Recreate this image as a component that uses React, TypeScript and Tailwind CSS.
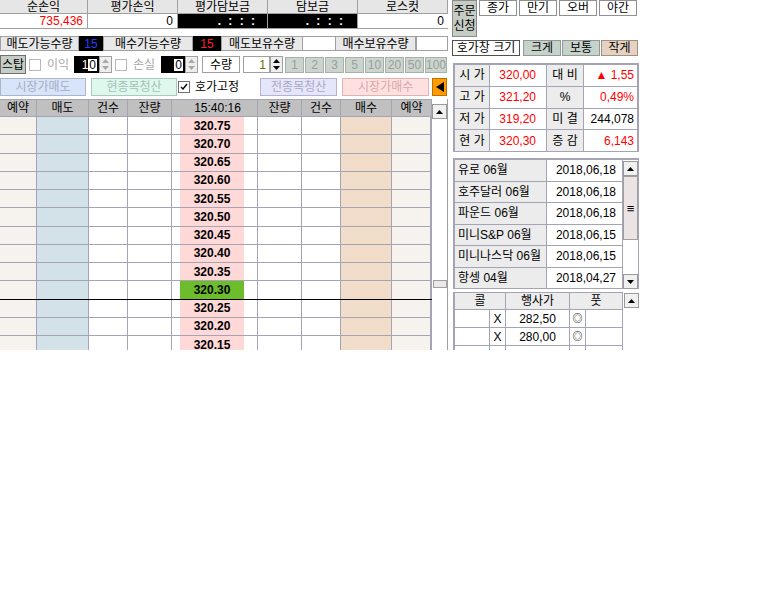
import React from "react";

const LINE = "border-[#a4a4b4]";

function Tri({ up, color = "#000" }: { up: boolean; color?: string }) {
  return (
    <svg width="7" height="4" viewBox="0 0 7 4">
      <polygon points={up ? "0,4 7,4 3.5,0" : "0,0 7,0 3.5,4"} fill={color} />
    </svg>
  );
}

function ScrollBtn({ up }: { up: boolean }) {
  return (
    <div className="w-[15px] h-[15px] border border-[#9a9a9a] bg-[#f0f0f0] flex items-center justify-center shrink-0">
      <Tri up={up} />
    </div>
  );
}

function Check({ checked, disabled }: { checked?: boolean; disabled?: boolean }) {
  return (
    <div
      className={
        "w-[12px] h-[12px] bg-white border flex items-center justify-center shrink-0 " +
        (disabled ? "border-[#b8b8b8]" : "border-[#707070]")
      }
    >
      {checked && (
        <svg width="8" height="8" viewBox="0 0 8 8">
          <polyline points="1,4 3,6 7,1" fill="none" stroke="#000" strokeWidth="1.4" />
        </svg>
      )}
    </div>
  );
}

function TopTable() {
  const heads = ["순손익", "평가손익", "평가담보금", "담보금", "로스컷"];
  const widths = ["w-[88px]", "w-[90px]", "w-[90px]", "w-[90px]", "w-[90px]"];
  return (
    <div className="w-[448px]">
      <div className="flex h-[14px]">
        {heads.map((h, i) => (
          <div
            key={h}
            className={widths[i] + " bg-[#e6e6e6] border-r border-b border-[#a0a0a0] flex items-center justify-center"}
          >
            {h}
          </div>
        ))}
      </div>
      <div className="flex h-[15px] border-b border-[#a0a0a0]">
        <div className="w-[88px] border-r border-[#a0a0a0] flex items-center justify-end pr-[4px] text-[#ff0000]">735,436</div>
        <div className="w-[90px] border-r border-[#a0a0a0] flex items-center justify-end pr-[4px]">0</div>
        <div className="w-[90px] bg-black border-r border-[#a0a0a0] flex items-center justify-end pr-[10px] text-white font-bold whitespace-pre tracking-[2px]">. : : :</div>
        <div className="w-[90px] bg-black border-r border-[#a0a0a0] flex items-center justify-end pr-[12px] text-white font-bold whitespace-pre tracking-[2px]">. : : :</div>
        <div className="w-[90px] flex items-center justify-end pr-[4px]">0</div>
      </div>
    </div>
  );
}

function QtyRow() {
  return (
    <div className="flex h-[15px] mt-[7px] w-[448px]">
      <div className="w-[79px] bg-[#e8e8e8] border border-[#a0a0a0] flex items-center justify-center">매도가능수량</div>
      <div className="w-[24px] bg-black flex items-center justify-center text-[#2040ff]">15</div>
      <div className="w-[90px] bg-[#e8e8e8] border border-[#a0a0a0] flex items-center justify-center">매수가능수량</div>
      <div className="w-[28px] bg-black flex items-center justify-center text-[#ff2020]">15</div>
      <div className="w-[82px] bg-[#e8e8e8] border border-[#a0a0a0] flex items-center justify-center">매도보유수량</div>
      <div className="w-[32px] bg-white border-y border-[#a0a0a0]"></div>
      <div className="w-[81px] bg-[#e8e8e8] border border-[#a0a0a0] flex items-center justify-center">매수보유수량</div>
      <div className="w-[32px] bg-white border border-[#a0a0a0]"></div>
    </div>
  );
}

function Spin({ dark }: { dark?: boolean }) {
  return (
    <div className="w-[13px] h-[17px] bg-[#eeeeee] border border-[#a0a0a0] flex flex-col items-center justify-around shrink-0">
      <Tri up color={dark ? "#000" : "#a8a8a8"} />
      <Tri up={false} color={dark ? "#000" : "#a8a8a8"} />
    </div>
  );
}

function StopRow() {
  const qty = ["1", "2", "3", "5", "10", "20", "50", "100"];
  return (
    <div className="flex items-center h-[19px] mt-[4px] w-[448px]">
      <div className="w-[26px] h-[19px] shrink-0 bg-[#c4cec6] border border-[#707070] flex items-center justify-center">스탑</div>
      <div className="ml-[3px]"><Check disabled /></div>
      <div className="w-[33px] shrink-0 pl-[6px] whitespace-nowrap text-[#a8a8a8]">이익</div>
      <div className="flex items-center shrink-0">
        <div className="w-[25px] h-[17px] bg-black flex items-center justify-end pr-[2px] text-white">
          1<span className="bg-white text-black px-[1px] leading-[12px]">0</span>
        </div>
        <Spin />
      </div>
      <div className="ml-[3px]"><Check disabled /></div>
      <div className="w-[34px] shrink-0 pl-[6px] whitespace-nowrap text-[#a8a8a8]">손실</div>
      <div className="flex items-center shrink-0">
        <div className="w-[24px] h-[17px] bg-black flex items-center justify-end pr-[2px] text-white">
          <span className="bg-white text-black px-[1px] leading-[12px]">0</span>
        </div>
        <Spin />
      </div>
      <div className="ml-[4px] w-[38px] h-[17px] shrink-0 bg-white border border-[#a0a0a0] flex items-center justify-center whitespace-nowrap">수량</div>
      <div className="ml-[3px] w-[27px] h-[17px] shrink-0 bg-white border border-[#a0a0a0] flex items-center justify-end pr-[3px] text-[#6a6a00]">1</div>
      <Spin dark />
      <div className="ml-[2px] flex gap-[1px] shrink-0">
        {qty.map((q) => (
          <div
            key={q}
            className={
              (q === "100" ? "w-[22px]" : "w-[19px]") +
              " h-[16px] bg-[#ccd4ce] border border-[#a8b0aa] flex items-center justify-center text-[#9aa09c]"
            }
          >
            {q}
          </div>
        ))}
      </div>
    </div>
  );
}

function OrderButtons() {
  return (
    <div className="flex items-center h-[18px] mt-[4px] w-[448px]">
      <div className="w-[86px] h-[18px] bg-[#d8e4fa] border border-[#aab6cc] flex items-center justify-center text-[#a4aec4]">시장가매도</div>
      <div className="ml-[5px] w-[86px] h-[18px] bg-[#def8ee] border border-[#aacabb] flex items-center justify-center text-[#a2c2b2]">현종목청산</div>
      <div className="ml-[1px]"><Check checked /></div>
      <div className="ml-[5px] whitespace-nowrap">호가고정</div>
      <div className="ml-[21px] w-[77px] h-[18px] bg-[#e6e6fa] border border-[#b2b2d2] flex items-center justify-center text-[#a8a8c8]">전종목청산</div>
      <div className="ml-[5px] w-[87px] h-[18px] bg-[#ffe0e0] border border-[#e0b2b2] flex items-center justify-center text-[#d8a8a8]">시장가매수</div>
      <div className="ml-[3px] w-[15px] h-[18px] bg-[#ff9c00] border border-[#c07000] flex items-center justify-center">
        <svg width="8" height="10" viewBox="0 0 8 10">
          <polygon points="8,0 8,10 0,5" fill="#000" />
        </svg>
      </div>
    </div>
  );
}

const prices = [
  "320.75", "320.70", "320.65", "320.60", "320.55", "320.50", "320.45",
  "320.40", "320.35", "320.30", "320.25", "320.20", "320.15",
];

function BookRow({ price, current }: { price: string; current: boolean }) {
  const bottom = current ? "border-b-black" : "";
  return (
    <div className={"flex h-[18.25px] border-b " + LINE + " " + bottom}>
      <div className={"w-[37px] bg-[#f6f3ef] border-r " + LINE}></div>
      <div className={"w-[52px] bg-[#d2e2e8] border-r " + LINE}></div>
      <div className={"w-[39px] bg-white border-r " + LINE}></div>
      <div className={"w-[44px] bg-white border-r " + LINE}></div>
      <div className={"w-[86px] bg-white border-r flex " + LINE}>
        <div className="w-[8px]"></div>
        <div
          className={
            "w-[64px] flex items-center justify-center font-bold text-black " +
            (current ? "bg-[#6cbc2c]" : "bg-[#ffd8d8]")
          }
        >
          {price}
        </div>
      </div>
      <div className={"w-[44px] bg-white border-r " + LINE}></div>
      <div className={"w-[39px] bg-white border-r " + LINE}></div>
      <div className={"w-[51px] bg-[#f2dcca] border-r " + LINE}></div>
      <div className={"w-[40px] bg-[#f6f3ef] border-r-2 " + LINE}></div>
    </div>
  );
}

function OrderBook() {
  const heads: [string, string][] = [
    ["예약", "w-[37px]"], ["매도", "w-[52px]"], ["건수", "w-[39px]"], ["잔량", "w-[44px]"],
    ["15:40:16", "w-[86px]"], ["잔량", "w-[44px]"], ["건수", "w-[39px]"], ["매수", "w-[51px]"], ["예약", "w-[40px]"],
  ];
  return (
    <div className="flex mt-[3px] w-[448px] flex-1 overflow-hidden">
      <div className="w-[432px]">
        <div className={"flex h-[18px] bg-[#c0c0c0] border-y " + LINE}>
          {heads.map(([h, w], i) => (
            <div key={i} className={w + " border-r flex items-center justify-center " + LINE + (i === 4 ? " pl-[6px]" : "")}>
              {h}
            </div>
          ))}
        </div>
        {prices.map((p) => (
          <BookRow key={p} price={p} current={p === "320.30"} />
        ))}
      </div>
      <div className="w-[16px] bg-white border-r border-[#a0a0a0] flex flex-col items-center pt-[5px]">
        <ScrollBtn up />
        <div className="mt-[161px] w-[14px] h-[8px] bg-[#ece8e8] border border-[#a0a0a0]"></div>
      </div>
    </div>
  );
}

function RightPanel() {
  const info: [string, string, string, string, string][] = [
    ["시 가", "320,00", "대 비", "▲ 1,55", "text-[#ff0000]"],
    ["고 가", "321,20", "%", "0,49%", "text-[#ff0000]"],
    ["저 가", "319,20", "미 결", "244,078", "text-black"],
    ["현 가", "320,30", "증 감", "6,143", "text-[#ff0000]"],
  ];
  const contracts: [string, string][] = [
    ["유로 06월", "2018,06,18"],
    ["호주달러 06월", "2018,06,18"],
    ["파운드 06월", "2018,06,18"],
    ["미니S&P 06월", "2018,06,15"],
    ["미니나스닥 06월", "2018,06,15"],
    ["항셍 04월", "2018,04,27"],
  ];
  const strikes = ["282,50", "280,00", ""];
  return (
    <div className="w-[192px] pl-[4px] flex flex-col">
      <div className="flex h-[37px]">
        <div className="w-[25px] h-[37px] bg-[#c4ccc4] border border-[#8a8a8a] flex flex-col items-center justify-center leading-[15px]">
          <span>주문</span>
          <span>신청</span>
        </div>
        <div className="ml-[2px] flex gap-[2px] h-[16px]">
          {["종가", "만기", "오버", "야간"].map((t) => (
            <div key={t} className="w-[38px] h-[16px] bg-white border border-[#909090] flex items-center justify-center">
              {t}
            </div>
          ))}
        </div>
      </div>
      <div className="flex h-[16px] mt-[3px] items-center">
        <div className="w-[68px] h-[16px] bg-white border border-[#505050] flex items-center justify-center whitespace-nowrap">호가창 크기</div>
        <div className="ml-[3px] w-[38px] h-[16px] bg-[#c6d2ca] border border-[#909a94] flex items-center justify-center">크게</div>
        <div className="ml-[1px] w-[38px] h-[16px] bg-[#c6d2ca] border border-[#909a94] flex items-center justify-center">보통</div>
        <div className="ml-[1px] w-[37px] h-[16px] bg-[#e6d2c2] border border-[#a09080] flex items-center justify-center">작게</div>
      </div>
      <div className={"ml-[1px] mt-[7px] w-[186px] border-2 border-b-0 " + LINE}>
        {info.map(([a, b, c, d, col]) => (
          <div key={a} className={"flex h-[21.75px] border-b " + LINE}>
            <div className={"w-[35px] bg-[#ececec] border-r flex items-center justify-center whitespace-pre " + LINE}>{a}</div>
            <div className={"w-[57px] bg-white border-r flex items-center justify-end pr-[10px] text-[#ff0000] " + LINE}>{b}</div>
            <div className={"w-[37px] bg-[#ececec] border-r flex items-center justify-center whitespace-pre " + LINE}>{c}</div>
            <div className={"flex-1 bg-white flex items-center justify-end pr-[3px] " + col}>{d}</div>
          </div>
        ))}
      </div>
      <div className="ml-[1px] mt-[6px] flex">
        <div className={"w-[170px] border-2 border-r-0 border-b-0 " + LINE}>
          {contracts.map(([n, d]) => (
            <div key={n} className={"flex h-[21.5px] border-b " + LINE}>
              <div className={"w-[92px] bg-[#ececec] border-r flex items-center pl-[3px] whitespace-nowrap " + LINE}>{n}</div>
              <div className={"flex-1 bg-white border-r flex items-center justify-end pr-[6px] " + LINE}>{d}</div>
            </div>
          ))}
        </div>
        <div className={"w-[16px] border-t-2 border-r flex flex-col items-center pt-[1px] " + LINE}>
          <ScrollBtn up />
          <div className="w-[15px] h-[64px] bg-[#ece4e4] border border-[#a0a0a0] flex items-center justify-center text-[13px] leading-none">≡</div>
          <div className="flex-1"></div>
          <ScrollBtn up={false} />
        </div>
      </div>
      <div className="ml-[1px] mt-[3px] flex">
        <div className={"w-[170px] border-l-2 " + LINE}>
          <div className={"flex h-[18px] bg-[#ececec] border-y " + LINE}>
            <div className={"w-[51px] border-r flex items-center justify-center " + LINE}>콜</div>
            <div className={"w-[64px] border-r flex items-center justify-center " + LINE}>행사가</div>
            <div className={"flex-1 border-r flex items-center justify-center " + LINE}>풋</div>
          </div>
          {strikes.map((s, i) => (
            <div key={i} className={"flex h-[18px] border-b bg-white " + LINE}>
              <div className={"w-[35px] border-r " + LINE}></div>
              <div className={"w-[16px] border-r flex items-center justify-center " + LINE}>{s ? "X" : ""}</div>
              <div className={"w-[64px] border-r flex items-center justify-center " + LINE}>{s}</div>
              <div className={"w-[16px] border-r flex items-center justify-center text-[10px] " + LINE}>{s ? "◎" : ""}</div>
              <div className={"flex-1 border-r " + LINE}></div>
            </div>
          ))}
        </div>
        <div className="w-[16px] flex flex-col items-center pt-[1px]">
          <ScrollBtn up />
        </div>
      </div>
    </div>
  );
}

export default function App() {
  return (
    <div className="w-[768px] h-[614px] bg-white overflow-hidden font-['Liberation_Sans','Noto_Sans_CJK_KR',sans-serif] text-[12px] leading-none text-black">
      <div className="flex w-[640px] h-[350px] overflow-hidden">
        <div className="w-[448px] flex flex-col">
          <TopTable />
          <QtyRow />
          <StopRow />
          <OrderButtons />
          <OrderBook />
        </div>
        <RightPanel />
      </div>
    </div>
  );
}
